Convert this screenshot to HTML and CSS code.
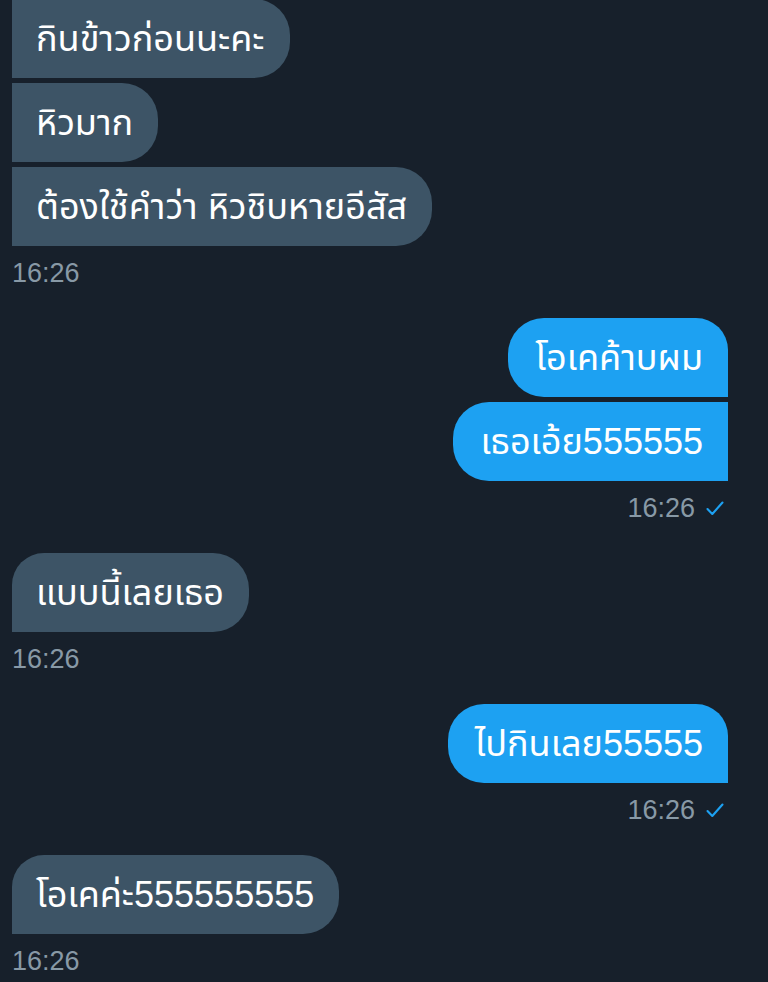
FILE: index.html
```html
<!DOCTYPE html>
<html lang="th">
<head>
<meta charset="utf-8">
<title>Messages</title>
<link rel="stylesheet" href="styles.css">
</head>
<body>
<div class="chat">
  <div class="group in first-group">
    <div class="bubble in mid">กินข้าวก่อนนะคะ</div>
    <div class="bubble in mid">หิวมาก</div>
    <div class="bubble in last">ต้องใช้คำว่า หิวชิบหายอีสัส</div>
    <div class="meta">16:26</div>
  </div>

  <div class="group out">
    <div class="bubble out first">โอเคค้าบผม</div>
    <div class="bubble out mid">เธอเอ้ย555555</div>
    <div class="meta">16:26 <svg class="check" viewBox="0 0 18 15" width="18" height="15"><path d="M1.5 8 L6.3 13 L16.5 1.5" fill="none" stroke="#1DA1F2" stroke-width="2.1" stroke-linecap="round" stroke-linejoin="round"/></svg></div>
  </div>

  <div class="group in">
    <div class="bubble in single">แบบนี้เลยเธอ</div>
    <div class="meta">16:26</div>
  </div>

  <div class="group out">
    <div class="bubble out single">ไปกินเลย55555</div>
    <div class="meta">16:26 <svg class="check" viewBox="0 0 18 15" width="18" height="15"><path d="M1.5 8 L6.3 13 L16.5 1.5" fill="none" stroke="#1DA1F2" stroke-width="2.1" stroke-linecap="round" stroke-linejoin="round"/></svg></div>
  </div>

  <div class="group in">
    <div class="bubble in single">โอเคค่ะ555555555</div>
    <div class="meta">16:26</div>
  </div>
</div>
</body>
</html>
```

FILE: styles.css
```css
html, body {
  margin: 0;
  padding: 0;
  background: #17202b;
}
body {
  width: 768px;
  height: 982px;
  overflow: hidden;
  font-family: "Liberation Sans", "Noto Sans Thai", "Noto Sans", sans-serif;
}
.chat {
  display: flex;
  flex-direction: column;
  padding: 0 40px 0 12px;
}
.group {
  display: flex;
  flex-direction: column;
  gap: 5px;
  margin-bottom: 32px;
}
.first-group {
  margin-top: -1px;
}
.group.in { align-items: flex-start; }
.group.out { align-items: flex-end; }
.bubble {
  height: 79px;
  line-height: 79px;
  padding: 0 25px 0 24px;
  font-size: 36px;
  color: #ffffff;
  white-space: nowrap;
  box-sizing: border-box;
  font-family: "Liberation Sans", "Noto Sans Thai", "Noto Sans", sans-serif;
}
.bubble.in {
  background: #3d5466;
  border-radius: 0 36px 36px 0;
}
.bubble.in.single {
  border-radius: 32px 36px 36px 0;
}
.bubble.out {
  background: #1da1f2;
  border-radius: 36px 0 0 36px;
  padding: 0 25px 0 27px;
}
.bubble.out.first,
.bubble.out.single {
  border-radius: 36px 32px 0 36px;
}
.meta {
  margin-top: 9px;
  height: 26px;
  line-height: 26px;
  font-size: 27px;
  color: #8899a6;
  display: flex;
  align-items: center;
  gap: 11px;
}
.group.out .meta {
  margin-right: 4px;
}
.check {
  display: block;
}
```
